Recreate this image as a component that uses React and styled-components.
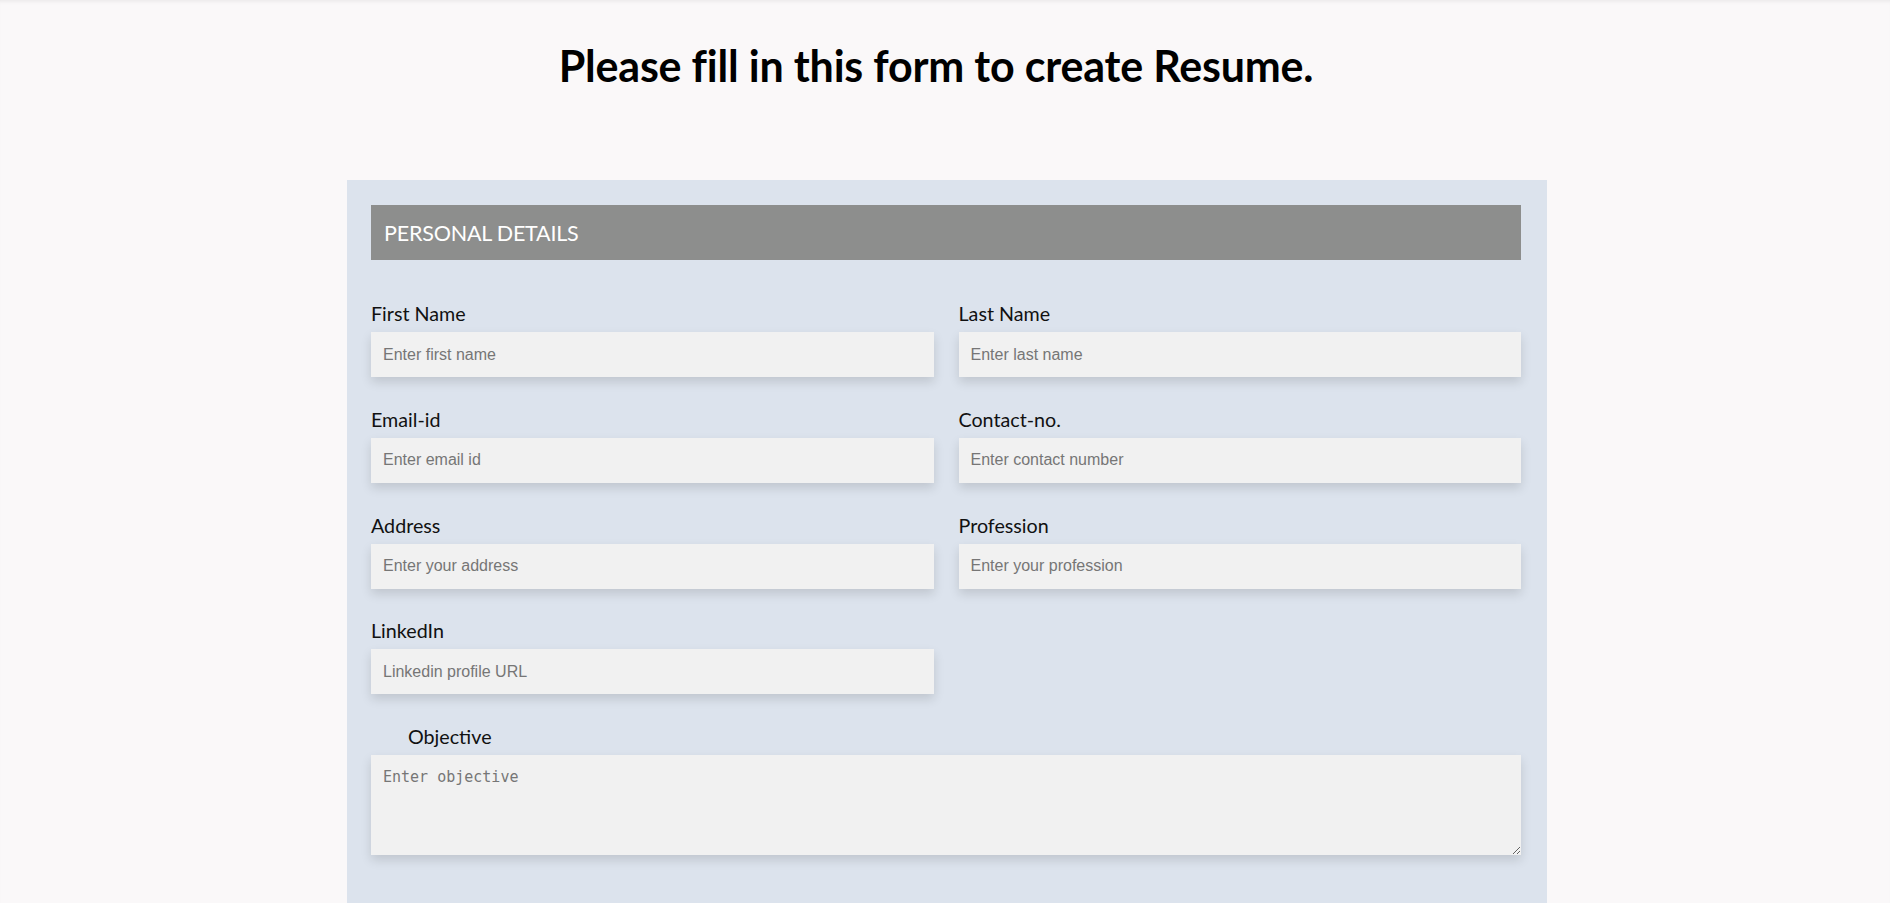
import React from 'react';
import styled, { createGlobalStyle } from 'styled-components';

const GlobalStyle = createGlobalStyle`
    * {
        box-sizing: border-box;
    }
    body {
        margin: 0;
        background-color: #faf8f9;
        font-family: Lato, "Open Sans", sans-serif;
        color: #111;
    }
`;

const Page = styled.div`
    min-height: 100vh;
    box-shadow: inset 0 4px 4px -3px rgba(0, 0, 0, 0.08);
    padding: 0 0 40px 4px;
`;

const Title = styled.h1`
    margin: 0;
    padding: 42px 22px 0 0;
    height: 180px;
    text-align: center;
    font-size: 43px;
    line-height: 48px;
    font-weight: 700;
    letter-spacing: -0.2px;
    color: #000;
`;

const Panel = styled.div`
    width: 1200px;
    margin: 0 auto;
    background-color: #dce3ed;
    padding: 25px 26px 60px 24px;
`;

const SectionHeader = styled.div`
    height: 55px;
    background-color: #8d8e8d;
    color: #fff;
    font-size: 21.5px;
    display: flex;
    align-items: center;
    padding-left: 13px;
    text-transform: uppercase;
    letter-spacing: -0.2px;
`;

const FieldGrid = styled.div`
    display: grid;
    grid-template-columns: 1fr 1fr;
    column-gap: 25px;
    margin-top: 42px;
`;

const Group = styled.div`
    margin-bottom: 30.8px;
    grid-column: ${props => (props.wide ? '1 / -1' : 'auto')};
`;

const Label = styled.label`
    display: block;
    font-size: 19.7px;
    line-height: 24px;
    margin-bottom: 6px;
    padding-left: ${props => (props.indent ? '37px' : '0')};
`;

const fieldLook = `
    display: block;
    width: 100%;
    border: none;
    outline: none;
    background-color: #f1f1f1;
    box-shadow: 0 5px 10px rgba(0, 0, 0, 0.13);
    padding: 0 12px;
    color: #222;
`;

const Input = styled.input`
    ${fieldLook}
    height: 45px;
    font-family: "Liberation Sans", Arial, sans-serif;
    font-size: 16px;
    &::placeholder {
        color: #767676;
    }
`;

const TextArea = styled.textarea`
    ${fieldLook}
    height: 100px;
    padding-top: 13px;
    font-family: "DejaVu Sans Mono", monospace;
    font-size: 15px;
    resize: vertical;
    &::placeholder {
        color: #767676;
    }
`;

const fields = [
    { label: 'First Name', placeholder: 'Enter first name' },
    { label: 'Last Name', placeholder: 'Enter last name' },
    { label: 'Email-id', placeholder: 'Enter email id' },
    { label: 'Contact-no.', placeholder: 'Enter contact number' },
    { label: 'Address', placeholder: 'Enter your address' },
    { label: 'Profession', placeholder: 'Enter your profession' },
    { label: 'LinkedIn', placeholder: 'Linkedin profile URL' },
];

const App = () => (
    <>
        <GlobalStyle />
        <Page>
            <Title>Please fill in this form to create Resume.</Title>
            <Panel>
                <SectionHeader>Personal Details</SectionHeader>
                <FieldGrid>
                    {fields.map((f) => (
                        <Group key={f.label}>
                            <Label>{f.label}</Label>
                            <Input type="text" placeholder={f.placeholder} />
                        </Group>
                    ))}
                    <Group wide>
                        <Label indent>Objective</Label>
                        <TextArea placeholder="Enter objective" />
                    </Group>
                </FieldGrid>
            </Panel>
        </Page>
    </>
);

export default App;
